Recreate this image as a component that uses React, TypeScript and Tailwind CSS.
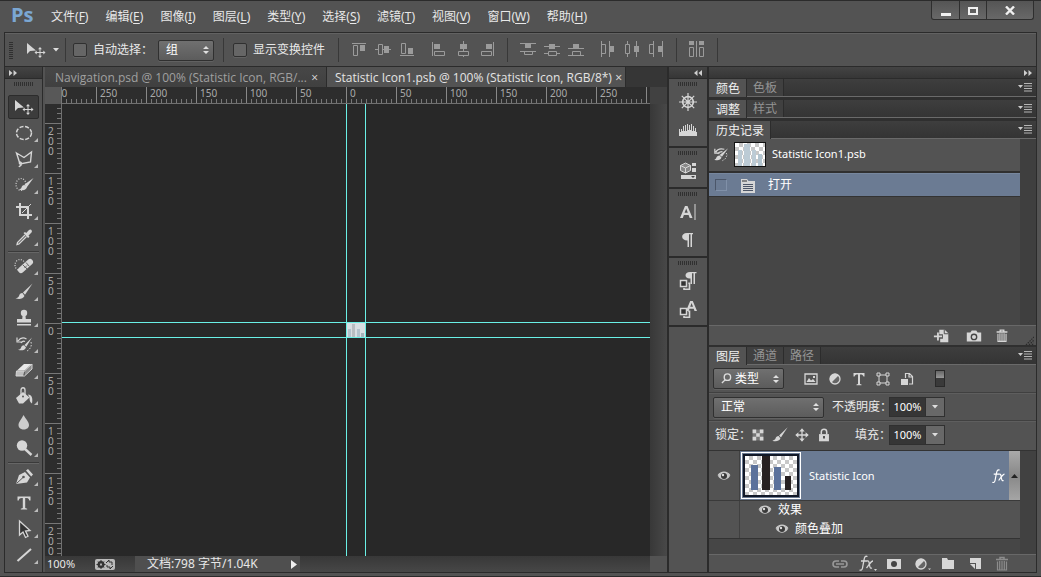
import React from "react";

type IconProps = { children: React.ReactNode; box?: string; className?: string };

function Icon({ children, box = "0 0 20 20", className = "size-5" }: IconProps) {
  return (
    <svg viewBox={box} className={`shrink-0 ${className}`} fill="none" stroke="none" aria-hidden="true">
      {children}
    </svg>
  );
}

const L = "#d6d6d6";

const moveShape = (
  <>
    <path d="M2 3v11l3-3 6-.5z" fill={L} />
    <path d="M15 8v9M10.500 12.500h9" stroke={L} />
    <path d="M15 7l-2 2.200h4zM15 18l-2-2.200h4zM9.500 12.500l2.200-2v4zM20.500 12.500l-2.200-2v4z" fill={L} />
  </>
);

const brushShape = (
  <>
    <path d="M18.500 1.500L9 10.500l2 2.200z" fill={L} />
    <path d="M8.500 11c-2 0-3 1-3.500 3-.4 1.200-1.500 2-3.500 2.300 3 1.200 7.500 1 9-2.300z" fill={L} />
  </>
);

const tools: { name: string; shape: React.ReactNode; breakBefore?: boolean; single?: boolean }[] = [
  { name: "移动工具", single: true, shape: moveShape },
  { name: "椭圆选框工具", shape: <ellipse cx="10" cy="10" rx="7.500" ry="6.500" stroke={L} strokeWidth="1.500" strokeDasharray="4 1.600" /> },
  {
    name: "多边形套索工具",
    shape: <path d="M2.500 4l7.500 4.500L17.500 3l-1 10L6 15 2.500 4zM6 15c-2-2 1-3 1.500-.5S6 16 5 18" stroke={L} strokeWidth="1.400" />,
  },
  {
    name: "快速选择工具",
    shape: (
      <>
        <ellipse cx="7" cy="9.500" rx="5" ry="6" stroke={L} strokeWidth="1.200" strokeDasharray="1 1.500" />
        <path d="M19.500 3l-9 6.500 2.300 2.700zM10.500 10c-2 0-2.500 1-3 2.500-.3 1-1.500 1.800-2.500 2 3 1.200 7 .8 8-2.200z" fill={L} />
      </>
    ),
  },
  {
    name: "裁剪工具",
    shape: (
      <>
        <path d="M6 2v12h12M2 6h12v12" stroke={L} strokeWidth="2" />
        <path d="M8 12l9-9" stroke={L} />
      </>
    ),
  },
  {
    name: "吸管工具",
    shape: (
      <>
        <path d="M11 8l-7.500 7.500L3 17.500l2-.5L12.500 9.500" stroke={L} strokeWidth="1.300" />
        <path d="M9.500 6l1.500-1 1.200 1L15 3c1.500-1.500 4 .5 2.500 2.500L14.500 8.500l1 1.200L14 11z" fill={L} />
      </>
    ),
  },
  {
    name: "污点修复画笔工具",
    breakBefore: true,
    shape: (
      <>
        <ellipse cx="6" cy="9" rx="5" ry="5.500" stroke={L} strokeWidth="1.200" strokeDasharray="1 1.500" />
        <path d="M7 14l9-8" stroke={L} strokeWidth="6" strokeLinecap="round" />
        <path d="M9 9l4 4M12 6.500l3.500 4M10.500 11.500v.5M12 10v.5M13 9v.5M11.500 11h1" stroke="#666" />
      </>
    ),
  },
  { name: "画笔工具", shape: brushShape },
  {
    name: "仿制图章工具",
    shape: (
      <>
        <circle cx="10" cy="5" r="3.200" fill={L} />
        <path d="M8.700 6h2.600l.5 5H17v3.500H3V11h5.200zM3 16h14v1.500H3z" fill={L} />
      </>
    ),
  },
  {
    name: "历史记录画笔工具",
    shape: (
      <>
        <path d="M18 3.500L10.500 11l1.800 1.800zM10 11.200c-2 0-2.500 1-3 2.500-.4 1.200-1.500 2-3 2 3 1.200 7 .8 8-2.300z" fill={L} />
        <path d="M4 7c2.500-3.500 6-3.500 8.500-2M3 3.500V8h4.500M7 9c1-1.500 3-2 4-1.500" stroke={L} strokeWidth="1.200" />
        <path d="M17 8c1 4-.5 7-4 9" stroke={L} strokeDasharray="1.500 1.500" />
      </>
    ),
  },
  {
    name: "橡皮擦工具",
    shape: (
      <>
        <path d="M3 10.500L10 4h7.500l-7 6.500z" fill="#e8e8e8" />
        <path d="M2.500 11h8l-1.500 5H2z" fill="#bdbdbd" />
        <path d="M11 10.800L18 4.500V9l-7.500 7z" fill="#8c8c8c" />
        <path d="M2.500 11h8l7.500-7v5l-7.500 7H2z" stroke={L} />
      </>
    ),
  },
  {
    name: "油漆桶工具",
    shape: (
      <>
        <path d="M2 12l7-6 6.500 5.500-6.500 6H5z" fill={L} />
        <path d="M7 10V4c0-3 4-3 4 0v5" stroke={L} strokeWidth="1.300" />
        <path d="M14 8.500c4 0 5 4 4 9-2-1-2.500-3-2.500-6z" fill={L} />
        <circle cx="9" cy="10.500" r="1" fill="#555" />
      </>
    ),
  },
  { name: "模糊工具", shape: <path d="M9.500 3c2.500 4.500 5.500 7 5.500 10 0 6-10.500 6-10.500 0 0-3 3-5.500 5-10z" fill="#ccc" /> },
  {
    name: "减淡工具",
    shape: (
      <>
        <circle cx="8" cy="7.500" r="5.200" fill={L} />
        <path d="M11 11l6.500 6" stroke={L} strokeWidth="2.400" />
      </>
    ),
  },
  {
    name: "钢笔工具",
    breakBefore: true,
    shape: (
      <>
        <path d="M2 17l3-9 6-3 5 5.500-3 5zM12 3.500l2-1.500 5 5.500-1.800 2z" fill={L} />
        <path d="M2.500 16.500l6.500-6" stroke="#555" />
        <circle cx="9.500" cy="10" r="1.300" fill="#555" />
      </>
    ),
  },
  { name: "横排文字工具", shape: <path d="M3.500 3.500h13v4h-1.200c-.5-2-1-2.600-4.100-2.600V15l2 .7v.8H6.800v-.8l2-.7V4.900C5.600 4.900 5.200 5.500 4.700 7.500H3.500z" fill={L} /> },
  { name: "路径选择工具", shape: <path d="M5.500 2v14l3.500-3 2.500 5.500 2.500-1.200-2.500-5.300 4.500-.5z" fill="#333" stroke={L} strokeWidth="1.300" /> },
  { name: "直线工具", shape: <path d="M3.500 16L17 4" stroke={L} strokeWidth="2" /> },
];

const G = "#9b9b9b";
const alignGroups: React.ReactNode[][] = [
  [
    <><path d="M2 2.500h14" stroke={G} /><path d="M3.500 4.500h4v10h-4z" stroke={G} /><path d="M10 4h5v6h-5z" fill={G} /></>,
    <><path d="M1 8.500h16" stroke={G} /><path d="M4.500 3.500h4v10h-4z" fill="#535353" stroke={G} /><path d="M10 5h5v7h-5z" fill={G} /></>,
    <><path d="M2 14.500h14" stroke={G} /><path d="M3.500 2.500h4v10h-4z" stroke={G} /><path d="M10 7h5v6h-5z" fill={G} /></>,
  ],
  [
    <><path d="M2.500 1v14" stroke={G} /><path d="M4 3h6v5H4z" fill={G} /><path d="M4.500 10.500h10v4h-10z" stroke={G} /></>,
    <><path d="M9.500 0v16" stroke={G} /><path d="M6 3h7v5H6z" fill={G} /><path d="M4.500 10.500h10v4h-10z" fill="#535353" stroke={G} /></>,
    <><path d="M15.500 1v14" stroke={G} /><path d="M8 3h6v5H8z" fill={G} /><path d="M3.500 10.500h10v4h-10z" stroke={G} /></>,
  ],
  [
    <><path d="M1 2.500h16M1 10.500h16" stroke={G} /><path d="M6 3h6v4H6z" fill={G} /><path d="M5.500 10.500h8v3h-8z" stroke={G} /></>,
    <><path d="M1 5.500h16M1 12.500h16" stroke={G} /><path d="M6 3h6v5H6z" fill={G} /><path d="M5.500 10.500h8v4h-8z" fill="#535353" stroke={G} /></>,
    <><path d="M1 7.500h16M1 14.500h16" stroke={G} /><path d="M6 3h6v4H6z" fill={G} /><path d="M5.500 10.500h8v4h-8z" stroke={G} /></>,
  ],
  [
    <><path d="M2.500 0v16M10.500 0v16" stroke={G} /><path d="M2.500 3.500h4v9h-4z" stroke={G} /><path d="M11 5h4v6h-4z" fill={G} /></>,
    <><path d="M4.500 0v16M13.500 0v16" stroke={G} /><path d="M2.500 3.500h4v9h-4z" fill="#535353" stroke={G} /><path d="M11 5h5v6h-5z" fill={G} /></>,
    <><path d="M6.500 0v16M15.500 0v16" stroke={G} /><path d="M2.500 3.500h4v9h-4z" stroke={G} /><path d="M11 5h4v6h-4z" fill={G} /></>,
  ],
];

function Sep() {
  return <span className="h-[24px] w-px shrink-0 bg-[#383838]" />;
}

function Grip() {
  return <span className="h-1 w-5 shrink-0 bg-[repeating-linear-gradient(90deg,#303030_0_1px,#535353_1px_2px)]" />;
}

function Chevrons({ left = false }: { left?: boolean }) {
  return (
    <svg viewBox="0 0 8 6" className="h-[6px] w-2" fill="#cfcfcf" aria-hidden="true">
      {left ? <path d="M3.500 0v6L0 3zM8 0v6L4.500 3z" /> : <path d="M0 0v6l3.500-3zM4.500 0v6L8 3z" />}
    </svg>
  );
}

function UpDown() {
  return (
    <svg viewBox="0 0 6 8" className="mr-px h-2 w-[6px] shrink-0" fill="#e0e0e0" aria-hidden="true">
      <path d="M3 0L6 3H0zM3 8L6 5H0z" />
    </svg>
  );
}

function Drop({ label, value, className, children }: { label: string; value: string; className: string; children?: React.ReactNode }) {
  return (
    <label className={`flex h-[21px] shrink-0 items-center rounded-[2px] border border-[#303030] bg-gradient-to-b from-[#707070] to-[#5c5c5c] pr-[3px] pl-[7px] text-white shadow-[0_1px_0_#616161] ${className}`}>
      {children}
      <select aria-label={label} className="min-w-0 flex-1 appearance-none bg-transparent outline-none">
        <option>{value}</option>
      </select>
      <UpDown />
    </label>
  );
}

function Percent({ label, id, width }: { label: string; id: string; width: string }) {
  return (
    <>
      <label htmlFor={id} className={`shrink-0 whitespace-nowrap ${width}`}>{label}</label>
      <span className="flex h-5 w-14 shrink-0 border border-[#303030]">
        <input id={id} defaultValue="100%" className="w-[35px] bg-[#363636] text-center text-[11px] text-white outline-none" />
        <button type="button" aria-label="调整数值" className="flex flex-1 items-center justify-center border-l border-[#303030] bg-[#686868]">
          <svg viewBox="0 0 6 4" className="h-1 w-[6px]" fill="#ddd"><path d="M0 0h6L3 3.500z" /></svg>
        </button>
      </span>
    </>
  );
}

function PanelTabs({ tabs }: { tabs: string[] }) {
  return (
    <div className="flex h-[18px] shrink-0 items-stretch border-b border-[#6a6a6a] bg-gradient-to-b from-[#3e3e3e] to-[#343434]">
      {tabs.map((t, i) => (
        <button
          type="button"
          key={t}
          className={i === 0 ? "-mb-px border-r border-[#2c2c2c] bg-[#535353] px-[6px] pt-px pl-[7px] leading-4 text-[#f0f0f0]" : "border-r border-[#2c2c2c] bg-[#404040] px-[6px] pt-px leading-4 text-[#949494]"}
        >
          {t}
        </button>
      ))}
      <button type="button" aria-label="面板菜单" className="ml-auto pr-1">
        <svg viewBox="0 0 14 9" className="h-[9px] w-[14px]">
          <path d="M0 2h5L2.500 5z" fill="#ccc" />
          <path d="M6 .5h8M6 3h8M6 5.500h8M6 8h8" stroke="#b5b5b5" />
        </svg>
      </button>
    </div>
  );
}

function Eye() {
  return (
    <svg viewBox="0 0 14 10" className="h-[10px] w-[14px] shrink-0">
      <path d="M1 5c3-5 9-5 12 0-3 5-9 5-12 0z" fill="#c9c9c9" />
      <circle cx="7" cy="5" r="3" fill="#3a3a3a" />
      <circle cx="6" cy="4" r="1.200" fill="#ddd" />
      <path d="M1 4.500C4 0 10 0 13 4.500" stroke="#ccc" strokeWidth="1.200" fill="none" />
    </svg>
  );
}

const historyBrush = (
  <>
    <path d="M17 4L8 11l2.500 2zM8 11.500c-2 0-3 1.200-3.500 2.500-.3 1-1 1.500-2 2 3 1.200 6.500.8 7.500-2.300z" fill={L} />
    <path d="M4 8c1.500-3 5-4 9-3M3 4.500V9h5M6 10c1-2 3-2.500 5-2.500" stroke={L} strokeWidth="1.300" />
    <path d="M15 9l1 2-2 4-3 2" stroke={L} strokeDasharray="1.500 1.500" />
  </>
);
const trash = (
  <>
    <path d="M4 5.500h12M8 5V3.500h4V5" stroke="currentColor" strokeWidth="1.500" />
    <path d="M5.500 7.500v8.500h9V7.500M7.700 7v9M10 7v9M12.300 7v9" stroke="currentColor" strokeWidth="1.200" />
  </>
);
const halfCircle = (
  <>
    <circle cx="10" cy="10" r="5" fill="#666" stroke={L} strokeWidth="1.300" />
    <path d="M13.700 6.300A5.200 5.200 0 0 0 6.300 13.700z" fill={L} />
  </>
);
const typeT = <path d="M4.500 4h11v3.500h-1C14 6 13.500 5.400 11 5.400V15l1.500.4v.8h-5v-.8L9 15V5.400C6.500 5.400 6 6 5.500 7.500h-1z" fill={L} />;
const copySquares = (
  <>
    <path d="M2.500 9.500h6v6h-6z" stroke={L} strokeWidth="1.500" fill="#333" />
    <path d="M6 17v1.200h5.500v-6h-1.200" stroke={L} strokeWidth="1.600" />
  </>
);
const fxGlyph = (
  <>
    <path d="M9.500 3.500c-2.500-1-3 1-3.500 3.500l-1.500 8c-.4 2-1.500 2.500-3 2M3 8h6" stroke="currentColor" strokeWidth="1.300" />
    <path d="M9 8c2-.5 2 1 2.500 4s1 3.500 2.500 3M15 8c-2 0-4 4-6.500 7" stroke="currentColor" strokeWidth="1.300" />
  </>
);

const dock: { name: string; shape: React.ReactNode }[][] = [
  [
    {
      name: "导航器",
      shape: (
        <>
          <circle cx="10" cy="10" r="5.300" stroke={L} strokeWidth="1.700" />
          <circle cx="10" cy="10" r="1.600" fill={L} />
          <path d="M10 1v18M1 10h18M3.800 3.800l12.400 12.400M16.200 3.800L3.800 16.200" stroke={L} strokeWidth="1.200" />
        </>
      ),
    },
    {
      name: "直方图",
      shape: <path d="M1 16V9h1v3h1V9h1v2h1V6h1v5h1V5h1v6h1V4h1v6h1V5h1v5h1V4h1v7h1V6h1v5h1V8h1v4h1v4z" fill={L} />,
    },
  ],
  [
    {
      name: "属性",
      shape: (
        <>
          <path d="M7.500 2l5 2.500v5L7.500 12l-5-2.500v-5z" fill="#888" stroke={L} />
          <path d="M2.500 4.500l5 2.500 5-2.500M7.500 7v5" stroke={L} />
          <path d="M14 2h4v3h-4zM14 7h4v4h-4zM3 14h15v4H3z" fill={L} />
          <path d="M13 15h4l-2 2z" fill="#444" />
        </>
      ),
    },
  ],
  [
    { name: "字符", shape: <><path d="M2 16L7 4h2.500l5 12h-2.800l-1.100-3H5.900l-1.100 3zM6.600 10.800h3.200L8.200 6.500z" fill={L} /><path d="M17 2v16" stroke={L} /></> },
    { name: "段落", shape: <path d="M15 3v1.200h-1V17h-1.500V4.200H11V17H9.500v-6.500C2.500 10.500 2.500 3 9 3z" fill={L} /> },
  ],
  [
    { name: "段落样式", shape: <>{copySquares}<path d="M18.500 1v1.200H17V13h-1.500V2.200h-1.500V13h-1.500V7.500C6 8 6 1 12 1z" fill={L} /></> },
    { name: "字符样式", shape: <>{copySquares}<path d="M8 12l4.200-10h2.600L19 12h-2.500l-.8-2.200h-4.200l-.8 2.200zM12.200 7.800h2.800l-1.400-3.700z" fill={L} /></> },
  ],
];

const menus: [string, string][] = [
  ["文件", "F"], ["编辑", "E"], ["图像", "I"], ["图层", "L"], ["类型", "Y"],
  ["选择", "S"], ["滤镜", "T"], ["视图", "V"], ["窗口", "W"], ["帮助", "H"],
];

const hLabels = ["300", "250", "200", "150", "100", "50", "0", "50", "100", "150", "200", "250", ""];
const vLabels = ["", "200", "150", "100", "50", "0", "50", "100", "150", "200"];

const checker = "bg-[repeating-conic-gradient(#c8c8c8_0_25%,#ffffff_0_50%)] bg-[length:8px_8px]";

function CheckOption({ label, className }: { label: string; className: string }) {
  return (
    <label className={`flex shrink-0 items-center gap-[6px] whitespace-nowrap ${className}`}>
      <input type="checkbox" className="size-[14px] appearance-none rounded-[2px] border border-[#303030] bg-[#666] shadow-[0_1px_0_#626262] checked:bg-[#bbb]" />
      {label}
    </label>
  );
}

export default function App() {
  return (
    <div className="flex h-screen flex-col overflow-hidden border-t border-[#2b2b2b] bg-[#535353] font-['Noto_Sans','Noto_Sans_CJK_SC',sans-serif] text-[12px] leading-4 text-[#e8e8e8]">
      <header className="flex h-[31px] shrink-0 items-start">
        <span className="ml-[11px] w-8 font-['Open_Sans',sans-serif] text-[20px] leading-[28px] font-bold text-[#7ba7d3]">Ps</span>
        <nav className="flex gap-px self-center">
          {menus.map(([name, key]) => (
            <button type="button" key={name} className="px-2 whitespace-nowrap">
              {name}(<span className="underline underline-offset-2">{key}</span>)
            </button>
          ))}
        </nav>
        <div className="mr-[7px] ml-auto flex h-[19px] divide-x divide-[#2e2e2e] rounded-b-[3px] border border-t-0 border-[#2e2e2e] bg-gradient-to-b from-[#555] to-[#686868]">
          <button type="button" aria-label="最小化" className="flex w-7 items-center justify-center"><span className="mt-2 h-[3px] w-[10px] bg-[#f0f0f0]" /></button>
          <button type="button" aria-label="最大化" className="flex w-[27px] items-center justify-center"><span className="mt-[2px] h-2 w-[10px] border-2 border-[#f0f0f0]" /></button>
          <button type="button" aria-label="关闭" className="flex w-[46px] items-center justify-center">
            <svg viewBox="0 0 10 9" className="h-[9px] w-[10px]"><path d="M1 .5l8 8M9 .5l-8 8" stroke="#f0f0f0" strokeWidth="2.400" /></svg>
          </button>
        </div>
      </header>

      <div className="mr-1 ml-1 flex min-h-0 flex-1 flex-col border border-[#2b2b2b]">
        <div className="flex h-[34px] shrink-0 items-center border-t border-b border-t-[#626262] border-b-[#2b2b2b]">
          <span className="ml-1 h-[18px] w-1 shrink-0 bg-[repeating-linear-gradient(0deg,#303030_0_1px,#535353_1px_2px)]" />
          <button type="button" aria-label="移动工具预设" className="ml-[10px] flex w-[42px] shrink-0 items-center gap-1 pl-[2px]">
            <Icon className="h-5 w-[22px]" box="0 0 22 20">{moveShape}</Icon>
            <svg viewBox="0 0 6 4" className="ml-[2px] h-1 w-[6px]" fill="#ddd"><path d="M0 0h6L3 3.500z" /></svg>
          </button>
          <Sep />
          <CheckOption label="自动选择：" className="ml-[7px] w-[85px]" />
          <Drop label="自动选择对象" value="组" className="w-14" />
          <span className="w-[9px]" />
          <Sep />
          <CheckOption label="显示变换控件" className="ml-[9px] w-[105px]" />
          <Sep />
          {alignGroups.map((group, i) => (
            <React.Fragment key={i}>
              <div className="ml-2 flex">
                {group.map((shape, j) => (
                  <button type="button" aria-label="对齐与分布" key={j} className="flex w-6 items-center justify-center">
                    <Icon box="0 0 18 18" className="size-[18px]">{shape}</Icon>
                  </button>
                ))}
              </div>
              {i % 2 === 1 && <><span className="w-2" /><Sep /></>}
            </React.Fragment>
          ))}
          <button type="button" aria-label="自动对齐图层" className="mx-2 flex w-6 justify-center">
            <Icon box="0 0 18 18" className="size-[18px]">
              <path d="M1 0h5v4H1zM11 0h5v4h-5z" fill={G} />
              <path d="M8.500 0v16M1.500 6.500h4v9h-4zM11.500 6.500h4v9h-4z" stroke={G} />
            </Icon>
          </button>
          <Sep />
        </div>

        <main className="flex min-h-0 flex-1">
          <aside className="flex w-[38px] shrink-0 flex-col border-r border-[#2b2b2b]">
            <div className="flex h-3 shrink-0 items-center border-b border-[#2b2b2b] bg-gradient-to-b from-[#444] to-[#363636] pl-1"><Chevrons /></div>
            <div className="flex h-[15px] shrink-0 justify-center pt-[3px]"><Grip /></div>
            {tools.map((t, i) => (
              <React.Fragment key={t.name}>
                {t.breakBefore && <span className="mx-[3px] h-[3px] shrink-0 border-b border-[#666] bg-[#3a3a3a] bg-clip-content pt-px pb-0" />}
                <button
                  type="button"
                  aria-label={t.name}
                  className={i === 0 ? "mx-[3px] my-px flex h-6 shrink-0 items-center justify-center rounded-[2px] border border-[#2c2c2c] bg-[#3c3c3c]" : "flex h-[26px] shrink-0 items-center justify-center pl-1"}
                >
                  <Icon className="h-5 w-[21px]" box="0 0 21 20">{t.shape}</Icon>
                  {!t.single && <svg viewBox="0 0 4 4" className="mb-1 -ml-px h-1 w-1 self-end" fill="#bbb"><path d="M4 0v4H0z" /></svg>}
                </button>
              </React.Fragment>
            ))}
          </aside>

          <section className="ml-[2px] flex min-w-0 flex-1 flex-col border-r-2 border-[#2b2b2b] bg-[#3d3d3d]">
            <div className="flex h-5 shrink-0 bg-[#363636] font-['Open_Sans',sans-serif] text-[12px]">
              <button type="button" className="flex w-[281px] shrink-0 items-center justify-between bg-gradient-to-b from-[#474747] to-[#404040] px-2 pt-[2px] pl-[10px] text-[#a0a0a0]">
                <span className="whitespace-nowrap">Navigation.psd @ 100% (Statistic Icon, RGB/...</span>
                <span className="text-[#ddd]">×</span>
              </button>
              <button type="button" className="flex w-[300px] shrink-0 items-center justify-between border-x border-[#2b2b2b] bg-[#535353] pr-[3px] pl-2 pt-[2px] text-[#e4e4e4]">
                <span className="whitespace-nowrap">Statistic Icon1.psb @ 100% (Statistic Icon, RGB/8*)</span>
                <span>×</span>
              </button>
            </div>
            <div className="flex h-[17px] shrink-0 bg-[#2d2d2d]">
              <span className="w-[17px] shrink-0 border-r border-[#777] bg-[#585858]" />
              <div className="flex min-w-0 flex-1 overflow-hidden border-b border-[#707070] text-[10px] leading-[13px] text-[#aaa]">
                {hLabels.map((n, i) => (
                  <span key={i} className={`flex h-4 w-[50px] shrink-0 items-start border-l border-[#888] bg-[repeating-linear-gradient(90deg,transparent_0_4px,#777_4px_5px)] bg-[length:100%_4px] bg-bottom bg-no-repeat pl-[3px] ${i === 0 ? "-ml-4" : ""}`}>
                    {n}
                  </span>
                ))}
              </div>
              <span className="w-[17px] shrink-0 bg-[#414141]" />
            </div>
            <div className="flex min-h-0 flex-1">
              <div className="flex w-[17px] shrink-0 flex-col overflow-hidden border-r border-[#707070] bg-[#2d2d2d] text-[10px] text-[#aaa]">
                {vLabels.map((n, i) => (
                  <span key={i} className={`flex h-[50px] shrink-0 flex-col border-t border-[#777] bg-[repeating-linear-gradient(180deg,transparent_0_4px,#777_4px_5px)] bg-[length:4px_100%] bg-right bg-no-repeat pt-[2px] pl-[3px] leading-[10px] ${i === 0 ? "-mt-[31px]" : ""}`}>
                    {n.split("").map((d, j) => <span key={j}>{d}</span>)}
                  </span>
                ))}
              </div>
              <div className="relative min-w-0 flex-1 overflow-hidden bg-[#282828]">
                <div className="absolute top-[219px] left-[285px] flex h-[14px] w-[18px] items-end justify-around bg-[#d8dee2]">
                  <span className="h-2 w-[3px] bg-[#b3c2cc]" />
                  <span className="h-[13px] w-[3px] bg-[#b8bdc1]" />
                  <span className="h-2 w-[3px] bg-[#b3c2cc]" />
                  <span className="h-1 w-[3px] bg-[#a5b4bc]" />
                </div>
                <span className="absolute inset-y-0 left-[284px] w-px bg-[#6af0e6]" />
                <span className="absolute inset-y-0 left-[303px] w-px bg-[#6af0e6]" />
                <span className="absolute inset-x-0 top-[218px] h-px bg-[#6af0e6]" />
                <span className="absolute inset-x-0 top-[233px] h-px bg-[#6af0e6]" />
              </div>
              <span className="w-[17px] shrink-0 bg-gradient-to-r from-[#383838] to-[#484848]" />
            </div>
            <div className="flex h-4 shrink-0 items-center bg-gradient-to-b from-[#383838] to-[#474747] text-[#e8e8e8]">
              <span className="w-12 pl-[2px] text-[11px]">100%</span>
              <button type="button" aria-label="导出设置" className="ml-[2px] flex w-5 items-center justify-center rounded-[2px] bg-[#bbb]">
                <svg viewBox="0 0 20 11" className="h-[11px] w-5">
                  <circle cx="6" cy="5.500" r="2.500" stroke="#333" strokeWidth="2" fill="none" />
                  <path d="M6 1v9M1.500 5.500h9M3 2.500l6 6M9 2.500l-6 6" stroke="#333" />
                  <circle cx="6" cy="5.500" r="1" fill="#bbb" />
                  <path d="M11 4l3-3v2h3v3M18 7l-3 3V8h-3V6" stroke="#333" fill="none" />
                </svg>
              </button>
              <button type="button" className="ml-5 flex h-full w-[165px] items-center justify-between bg-[#4f4f4f] pr-[3px] pl-3 whitespace-nowrap">
                <span>文档:798 字节/1.04K</span>
                <svg viewBox="0 0 6 9" className="h-[9px] w-[6px]" fill="#f0f0f0"><path d="M0 0v9l6-4.500z" /></svg>
              </button>
              <span className="ml-auto h-full w-[17px] bg-[#535353]" />
            </div>
          </section>

          <aside className="flex w-[38px] shrink-0 flex-col">
            <div className="flex h-3 shrink-0 items-center justify-end border-b border-[#2b2b2b] bg-gradient-to-b from-[#444] to-[#363636] pr-[5px]"><Chevrons left /></div>
            {dock.map((group, i) => (
              <div key={i} className="flex shrink-0 flex-col items-center border-b-2 border-[#2b2b2b] pt-[3px]">
                <Grip />
                <div className={group.length > 1 ? "flex flex-col gap-2 pt-[6px] pb-[6px]" : "flex flex-col pt-[6px] pb-[6px]"}>
                  {group.map((d) => (
                    <button type="button" aria-label={d.name} key={d.name} className="flex h-5 items-center"><Icon>{d.shape}</Icon></button>
                  ))}
                </div>
              </div>
            ))}
          </aside>

          <aside className="flex w-[329px] shrink-0 flex-col border-l-2 border-[#2b2b2b]">
            <div className="flex h-3 shrink-0 items-center justify-end border-b border-[#2b2b2b] bg-gradient-to-b from-[#444] to-[#363636] pr-1"><Chevrons /></div>
            <PanelTabs tabs={["颜色", "色板"]} />
            <span className="h-[3px] shrink-0 bg-[#2f2f2f]" />
            <PanelTabs tabs={["调整", "样式"]} />
            <span className="h-[3px] shrink-0 bg-[#2f2f2f]" />
            <section className="flex min-h-0 flex-1 flex-col">
              <PanelTabs tabs={["历史记录"]} />
              <div className="flex min-h-0 flex-1 bg-[#3f3f3f]">
                <div className="mr-4 flex-1 bg-[#464646]">
                  <div className="flex h-[34px] items-center border-b-2 border-[#303030] bg-[#535353] pb-[2px] pl-[3px]">
                    <Icon className="h-5 w-[19px]">{historyBrush}</Icon>
                    <span className={`ml-[3px] flex h-[25px] w-8 shrink-0 items-end justify-around border border-[#111] px-[2px] ${checker}`}>
                      <span className="h-4 w-1 bg-[#bccbd5]" />
                      <span className="h-[22px] w-[6px] bg-[#bccbd5]" />
                      <span className="h-4 w-1 bg-[#bccbd5]" />
                      <span className="h-3 w-1 bg-[#b2c4cf]" />
                    </span>
                    <span className="ml-[6px] text-[11px] text-white">Statistic Icon1.psb</span>
                  </div>
                  <div className="flex h-6 items-center border-t border-b border-t-[#77879e] border-b-[#333] bg-[#6b7b93] pl-[6px] text-white">
                    <span className="size-3 shrink-0 border border-[#4b5669] border-r-[#8090a8] border-b-[#8090a8]" />
                    <svg viewBox="0 0 14 15" className="ml-[14px] h-[15px] w-[14px]">
                      <path d="M0 1h6l1.500 2H14v12H0z" fill={L} />
                      <path d="M1 3h5" stroke="#333" />
                      <path d="M2 6.500h10M2 8.500h10M2 10.500h10M2 12.500h10" stroke="#4c5566" />
                    </svg>
                    <span className="ml-[13px]">打开</span>
                  </div>
                </div>
              </div>
              <div className="flex h-5 shrink-0 items-center border-t border-[#686868] text-[#d6d6d6]">
                <button type="button" aria-label="从当前状态创建新文档" className="ml-auto">
                  <Icon className="size-[18px]"><path d="M7 3h6l4 4v10H8v-4h3V8H7z" fill={L} /><path d="M1 10.500h9M5.500 6v9" stroke={L} strokeWidth="2" /><path d="M12.500 3v4.500H17" stroke="#444" /></Icon>
                </button>
                <button type="button" aria-label="创建新快照" className="ml-[14px]">
                  <Icon className="size-[18px]"><path d="M2 6h4l1.500-2h5L14 6h4v10H2z" fill={L} /><circle cx="10" cy="11" r="3" stroke="#444" strokeWidth="1.500" /></Icon>
                </button>
                <button type="button" aria-label="删除当前状态" className="ml-[10px]"><Icon className="size-[18px]">{trash}</Icon></button>
                <svg viewBox="0 0 9 9" className="mr-[2px] ml-[14px] size-[9px] self-end" fill="none"><path d="M1 9L9 1M4 9l5-5M7 9l2-2" stroke="#2b2b2b" strokeWidth="1.200" strokeDasharray="1.500 1" /></svg>
              </div>
            </section>
            <span className="h-[2px] shrink-0 bg-[#2f2f2f]" />

            <section className="flex shrink-0 flex-col">
              <PanelTabs tabs={["图层", "通道", "路径"]} />
              <div className="flex h-7 items-center border-b border-[#404040] pl-1">
                <Drop label="图层过滤类型" value="类型" className="w-[71px]">
                  <svg viewBox="0 0 12 12" className="mr-[3px] size-[11px] shrink-0" fill="none" stroke="#ddd" strokeWidth="1.500"><circle cx="7" cy="4.500" r="3.500" /><path d="M4.500 7.500L1 11" /></svg>
                </Drop>
                <div className="ml-[17px] flex gap-1">
                  <button type="button" aria-label="像素图层"><Icon><path d="M4 5h12v10H4z" stroke={L} strokeWidth="1.300" /><path d="M5.500 13l2.500-4 2 2.500 2-1.500 2.500 3z" fill={L} /><path d="M12 7h2v2h-2z" fill={L} /></Icon></button>
                  <button type="button" aria-label="调整图层"><Icon>{halfCircle}</Icon></button>
                  <button type="button" aria-label="文字图层"><Icon>{typeT}</Icon></button>
                  <button type="button" aria-label="形状图层"><Icon><path d="M6 6h8v8H6z" stroke={L} /><path d="M4 4h3v3H4zM13 4h3v3h-3zM4 13h3v3H4zM13 13h3v3h-3z" stroke={L} fill="#555" /></Icon></button>
                  <button type="button" aria-label="智能对象"><Icon><path d="M8.500 9V4.500h4L15.500 7.500V15H12M12 4.500V8h3.500" stroke={L} strokeWidth="1.200" /><path d="M4 10h7v6H4z" fill={L} /></Icon></button>
                </div>
                <button type="button" aria-label="图层过滤开关" className="ml-[18px] flex h-[17px] w-[10px] flex-col border border-[#2a2a2a] bg-[#3a3a3a]"><span className="h-[7px] w-full bg-gradient-to-b from-[#666] to-[#999]" /></button>
              </div>
              <div className="flex h-7 items-center border-t border-b border-t-[#5e5e5e] border-b-[#404040] pl-1">
                <Drop label="混合模式" value="正常" className="w-[111px]" />
                <span className="w-2" />
                <Percent label="不透明度：" id="opacity" width="w-[57px]" />
              </div>
              <div className="flex h-[30px] items-center border-t border-b border-t-[#5e5e5e] border-b-[#333] pb-[2px] pl-[6px]">
                <span className="w-8 whitespace-nowrap">锁定：</span>
                <div className="flex gap-1 pl-[2px]">
                  <button type="button" aria-label="锁定透明像素"><Icon className="size-[18px]"><path d="M4 4h12v12H4z" fill="#777" /><path d="M4 4h4v4H4zM12 4h4v4h-4zM8 8h4v4H8zM4 12h4v4H4zM12 12h4v4h-4z" fill={L} /></Icon></button>
                  <button type="button" aria-label="锁定图像像素"><Icon className="size-[18px]">{brushShape}</Icon></button>
                  <button type="button" aria-label="锁定位置"><Icon className="size-[18px]"><path d="M10 4v12M4 10h12" stroke={L} strokeWidth="1.400" /><path d="M10 2.500L7 6h6zM10 17.500L7 14h6zM2.500 10L6 7v6zM17.500 10L14 7v6z" fill={L} /></Icon></button>
                  <button type="button" aria-label="锁定全部"><Icon className="size-[18px]"><path d="M4.500 9h11v8h-11z" fill={L} /><path d="M7 9V6.500c0-4 6-4 6 0V9" stroke={L} strokeWidth="1.700" /><path d="M10 11v3" stroke="#444" strokeWidth="2" /></Icon></button>
                </div>
                <span className="w-[22px]" />
                <Percent label="填充：" id="fill" width="w-[34px]" />
              </div>
              <div className="flex h-[103px] bg-[#414141]">
                <div className="mr-4 flex-1 bg-[#464646]">
                  <div className="flex h-[50px] border-b border-[#3a3a3a] bg-[#6b7b93]">
                    <button type="button" aria-label="图层可见性" className="flex w-[31px] shrink-0 items-center justify-center border-r border-[#404040] bg-[#535353]"><Eye /></button>
                    <span className="my-px ml-px flex h-[47px] w-[60px] shrink-0 border border-white p-px">
                      <span className={`flex min-w-0 flex-1 items-end justify-center gap-[4px] border-2 border-[#111827] pb-[5px] ${checker}`}>
                        <span className="h-[25px] w-[7px] bg-[#5b719b]" />
                        <span className="h-[34px] w-2 bg-[#272020]" />
                        <span className="h-[23px] w-[7px] bg-[#5b719b]" />
                        <span className="h-[14px] w-[6px] bg-[#272020]" />
                      </span>
                    </span>
                    <span className="ml-2 self-center text-[11px] text-white">Statistic Icon</span>
                    <span className="ml-auto self-center text-white"><Icon className="size-[18px]">{fxGlyph}</Icon></span>
                    <button type="button" aria-label="折叠效果" className="flex w-[11px] items-center justify-center bg-gradient-to-b from-[#aaa] via-[#888] to-[#a5a5a5]"><svg viewBox="0 0 7 4" className="h-1 w-[7px]"><path d="M0 4h7L3.500 0z" fill="#222" /></svg></button>
                  </div>
                  <div className="flex h-[38px] border-b border-[#333] bg-[#535353]">
                    <span className="w-[31px] border-r border-[#404040]" />
                    <div className="pl-[18px] text-white">
                      <div className="flex h-[18px] items-center gap-[6px]"><Eye />效果</div>
                      <div className="flex h-[19px] items-center gap-[6px] pl-[17px]"><Eye />颜色叠加</div>
                    </div>
                  </div>
                </div>
              </div>
              <div className="flex h-[18px] items-center justify-end gap-[7px] border-t border-[#686868] pr-[24px] text-[#8c8c8c]">
                <button type="button" aria-label="链接图层"><Icon><path d="M9 7H6c-4 0-4 6 0 6h3M11 7h3c4 0 4 6 0 6h-3M6 10h8" stroke="#999" strokeWidth="1.600" /></Icon></button>
                <button type="button" aria-label="图层样式" className="text-[#d6d6d6]"><Icon box="-1 1 20 20">{fxGlyph}<path d="M16 16h3l-1.500 2z" fill={L} /></Icon></button>
                <button type="button" aria-label="图层蒙版"><Icon><path d="M3 5h14v10H3z" fill={L} /><circle cx="10" cy="10" r="3" fill="#444" /></Icon></button>
                <button type="button" aria-label="新建调整图层"><Icon>{halfCircle}<path d="M17 14.500h3L18.500 16z" fill={L} /></Icon></button>
                <button type="button" aria-label="新建组"><Icon><path d="M4 4h5l1 2h6v9H4z" fill={L} /></Icon></button>
                <button type="button" aria-label="新建图层"><Icon><path d="M5 4h11v11h-5V9H5z" fill={L} /><path d="M5 10h5v5z" fill={L} /></Icon></button>
                <button type="button" aria-label="删除图层"><Icon>{trash}</Icon></button>
              </div>
            </section>
          </aside>
        </main>
      </div>
      <footer className="h-[4px] shrink-0 border-b border-[#2b2b2b]" />
    </div>
  );
}
